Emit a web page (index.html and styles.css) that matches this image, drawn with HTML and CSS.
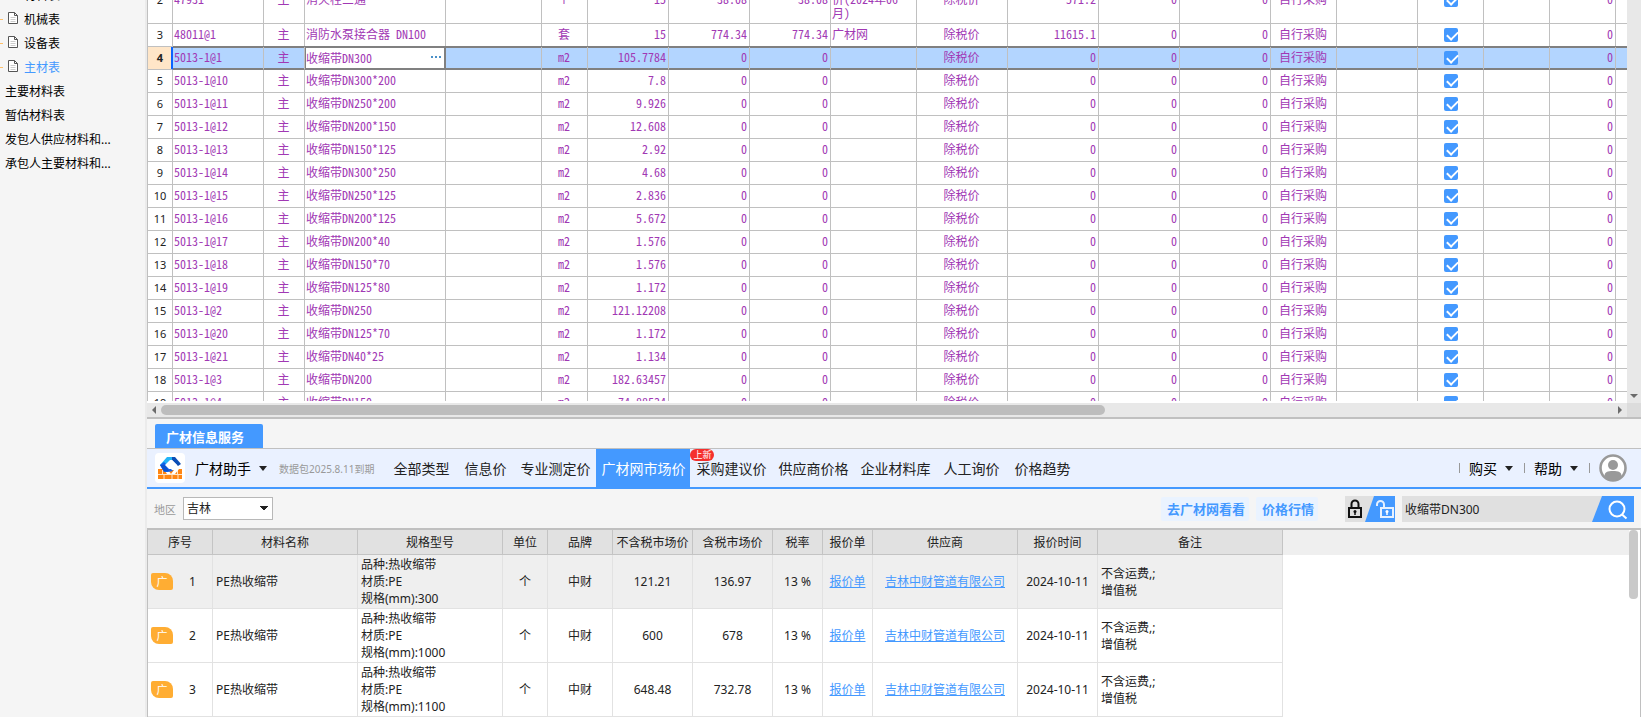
FILE: index.html
```html
<!DOCTYPE html>
<html lang="zh-CN">
<head>
  <meta charset="UTF-8">
  <meta name="viewport" content="width=device-width, initial-scale=1.0">
  <title>主材表</title>
  <link rel="stylesheet" href="styles.css">
</head>
<body>
  <!-- Shared icons -->
  <svg class="sprite" aria-hidden="true">
    <symbol id="icon-doc" viewBox="0 0 10 12">
      <path d="M.5.5h6l3 3v8h-9z" fill="#fff" stroke="#555"/>
      <path d="M6.5.5v3h3" fill="none" stroke="#555"/>
      <path d="M2.5 5.5h5M2.5 7.5h5M2.5 9.5h5" stroke="#ccc"/>
    </symbol>
  </svg>

  <!-- Sidebar -->
  <nav id="sidebar">
    <a class="child" href="#"><svg><use href="#icon-doc"/></svg>材料表</a>
    <a class="child" href="#"><svg><use href="#icon-doc"/></svg>机械表</a>
    <a class="child" href="#"><svg><use href="#icon-doc"/></svg>设备表</a>
    <a class="child current" href="#"><svg><use href="#icon-doc"/></svg>主材表</a>
    <a href="#">主要材料表</a>
    <a href="#">暂估材料表</a>
    <a href="#">发包人供应材料和...</a>
    <a href="#">承包人主要材料和...</a>
  </nav>

  <main>
    <!-- Material grid -->
    <section id="grid-area">
      <div id="grid">
        <table class="materials">
          <colgroup>
            <col class="w25"><col class="w91"><col class="w41"><col class="w141"><col class="w96">
            <col class="w46"><col class="w81"><col class="w81"><col class="w81"><col class="w86">
            <col class="w91"><col class="w91"><col class="w81"><col class="w91"><col class="w66">
            <col class="w81"><col class="w66"><col class="w66"><col class="w66"><col>
          </colgroup>
          <tbody id="materials-body"></tbody>
        </table>
      </div>
      <div class="vscroll"><span class="arrow down"></span></div>
      <div class="hscroll">
        <span class="arrow left"></span>
        <div class="track"><div class="thumb"></div></div>
        <span class="arrow right"></span>
      </div>
      <div class="corner"></div>
    </section>

    <!-- Price information service -->
    <section id="service">
      <div class="service-tabs">
        <button class="service-tab">广材信息服务</button>
      </div>

      <header class="topbar">
        <svg class="logo" viewBox="0 0 30 30">
          <rect width="30" height="30" rx="4" fill="#fff"/>
          <path d="M3 16h24v10H3z" fill="#ff8512"/>
          <path d="M3 21.500h24M9 22v4M17 22v4M23 22v4M7.500 17v4M22.500 16v5" stroke="#ffe3c4"/>
          <path d="M8 15l4 6h8l4-5h-5z" fill="#fff"/>
          <path d="M13 17h6l-3 4z" fill="#ff8512"/>
          <path d="M12 4h7l-6 8H5z" fill="#22b4f7"/>
          <path d="M5 12l4-3 9 9-5 1H9z" fill="#1261e8"/>
          <path d="M5 12h5l4 6H9z" fill="#0b53d0"/>
          <path d="M17 4h3l6 7-3 2-6-6z" fill="#0b4db5"/>
          <path d="M10 12l5-5h2l5 5-4 4h-4z" fill="#fff"/>
        </svg>
        <button class="drop brand">广材助手</button>
        <span class="expires">数据包2025.8.11到期</span>
        <nav class="menu">
          <a class="short" href="#">全部类型</a>
          <a class="short" href="#">信息价</a>
          <a href="#">专业测定价</a>
          <a class="active" href="#">广材网市场价</a>
          <a href="#">采购建议价<span class="new">上新</span></a>
          <a href="#">供应商价格</a>
          <a href="#">企业材料库</a>
          <a class="short" href="#">人工询价</a>
          <a class="short" href="#">价格趋势</a>
        </nav>
        <div class="account">
          <button class="drop">购买</button>
          <button class="drop">帮助</button>
          <button class="avatar" aria-label="账户">
            <svg viewBox="0 0 28 28">
              <circle cx="14" cy="14" r="12.5" fill="#fff" stroke="#999" stroke-width="2.6"/>
              <circle cx="14" cy="11" r="5" fill="#999"/>
              <path d="M5.500 22c0-4 3-5 8.500-5s8.500 1 8.500 5c-2 3-5 4.500-8.500 4.500S7.500 25 5.500 22z" fill="#999"/>
            </svg>
          </button>
        </div>
      </header>

      <div class="filters">
        <label for="region">地区</label>
        <select id="region">
          <option>吉林</option>
        </select>
        <div class="links">
          <a href="#">去广材网看看</a>
          <a href="#">价格行情</a>
        </div>
        <button class="lock" aria-label="锁定">
          <svg viewBox="0 0 50 26">
            <path d="M29 0h21v26H20z" fill="#4499ff"/>
            <rect x="4" y="12" width="12" height="9" fill="none" stroke="#111" stroke-width="2"/>
            <path d="M6.500 12V8a3.500 3.500 0 0 1 7 0v4" fill="none" stroke="#111" stroke-width="2"/>
            <circle cx="10" cy="15.500" r="1.500" fill="#111"/><path d="M10 16v3" stroke="#111" stroke-width="1.500"/>
            <rect x="36" y="12" width="12" height="9" fill="none" stroke="#e6f1ff" stroke-width="2"/>
            <path d="M32 10V8.500a3.500 3.500 0 0 1 7 0V12" fill="none" stroke="#e6f1ff" stroke-width="2"/>
            <circle cx="42" cy="15.500" r="1.500" fill="#fff"/><path d="M42 16v3" stroke="#fff" stroke-width="1.500"/>
          </svg>
        </button>
        <form class="search">
          <input type="text" value="收缩带DN300" aria-label="搜索">
          <button type="button" aria-label="搜索">
            <svg viewBox="0 0 42 26">
              <path d="M10 0h32v26H0z" fill="#4499ff"/>
              <circle cx="25" cy="13" r="7.500" fill="none" stroke="#fff" stroke-width="2"/>
              <path d="M30 18.500l4.500 4" stroke="#fff" stroke-width="2"/>
            </svg>
          </button>
        </form>
      </div>

      <div class="results">
        <table class="quotes">
          <thead>
            <tr>
              <th class="w65">序号</th>
              <th class="w145">材料名称</th>
              <th class="w145">规格型号</th>
              <th class="w45">单位</th>
              <th class="w65">品牌</th>
              <th class="w80">不含税市场价</th>
              <th class="w80">含税市场价</th>
              <th class="w50">税率</th>
              <th class="w50">报价单</th>
              <th class="w145">供应商</th>
              <th class="w80">报价时间</th>
              <th class="w185">备注</th>
            </tr>
          </thead>
          <tbody id="quotes-body"></tbody>
        </table>
        <div class="results-scroll"><div class="thumb"></div></div>
      </div>
    </section>
  </main>

  <script>
    // code, name, unit, quantity, price, source, total
    const materials = [
      ['47931', '消火栓三通', '个', '15', '38.08', '长春市信息<br>价(2024年06<br>月)', '571.2'],
      ['48011@1', '消防水泵接合器 DN100', '套', '15', '774.34', '广材网', '11615.1'],
      ['5013-1@1', '收缩带DN300', 'm2', '105.7784'],
      ['5013-1@10', '收缩带DN300*200', 'm2', '7.8'],
      ['5013-1@11', '收缩带DN250*200', 'm2', '9.926'],
      ['5013-1@12', '收缩带DN200*150', 'm2', '12.608'],
      ['5013-1@13', '收缩带DN150*125', 'm2', '2.92'],
      ['5013-1@14', '收缩带DN300*250', 'm2', '4.68'],
      ['5013-1@15', '收缩带DN250*125', 'm2', '2.836'],
      ['5013-1@16', '收缩带DN200*125', 'm2', '5.672'],
      ['5013-1@17', '收缩带DN200*40', 'm2', '1.576'],
      ['5013-1@18', '收缩带DN150*70', 'm2', '1.576'],
      ['5013-1@19', '收缩带DN125*80', 'm2', '1.172'],
      ['5013-1@2', '收缩带DN250', 'm2', '121.12208'],
      ['5013-1@20', '收缩带DN125*70', 'm2', '1.172'],
      ['5013-1@21', '收缩带DN40*25', 'm2', '1.134'],
      ['5013-1@3', '收缩带DN200', 'm2', '182.63457'],
      ['5013-1@4', '收缩带DN150', 'm2', '74.88534'],
    ];
    const firstRow = 2;
    const selectedRow = 4;

    document.getElementById('materials-body').innerHTML = materials.map((m, i) => {
      const [code, name, unit, quantity, price = '0', source = '', total = '0'] = m;
      const no = firstRow + i;
      const selected = no === selectedRow;
      const nameCell = selected
        ? `<td class="editing"><div class="editor"><input type="text" value="${name}" aria-label="名称"><button aria-label="更多"><i></i><i></i><i></i></button></div></td>`
        : `<td>${name}</td>`;
      return `<tr class="${selected ? 'selected' : ''}${source.includes('<br>') ? ' tall' : ''}">
        <th scope="row">${no}</th>
        <td>${code}</td>
        <td class="center">主</td>
        ${nameCell}
        <td></td>
        <td class="center">${unit}</td>
        <td class="number">${quantity}</td>
        <td class="number">${price}</td>
        <td class="number">${price}</td>
        <td>${source}</td>
        <td class="center">除税价</td>
        <td class="number">${total}</td>
        <td class="number">0</td>
        <td class="number">0</td>
        <td class="center">自行采购</td>
        <td></td>
        <td class="check"><input type="checkbox" checked aria-label="第${no}行"></td>
        <td></td>
        <td class="number">0</td>
        <td></td>
      </tr>`;
    }).join('');

    const quotes = [
      { size: '300', net: '121.21', gross: '136.97' },
      { size: '1000', net: '600', gross: '678' },
      { size: '1100', net: '648.48', gross: '732.78' },
    ];

    document.getElementById('quotes-body').innerHTML = quotes.map((q, i) => `<tr>
        <td><div class="serial"><span class="badge">广</span>${i + 1}</div></td>
        <td class="text">PE热收缩带</td>
        <td class="text">品种:热收缩带<br>材质:PE<br>规格(mm):${q.size}</td>
        <td>个</td>
        <td>中财</td>
        <td>${q.net}</td>
        <td>${q.gross}</td>
        <td>13 %</td>
        <td><a href="#">报价单</a></td>
        <td><a href="#">吉林中财管道有限公司</a></td>
        <td>2024-10-11</td>
        <td class="text">不含运费,;<br>增值税</td>
      </tr>`).join('');

    document.getElementById('grid').scrollTop = 24;
    document.getElementById('sidebar').scrollTop = 17;
  </script>
</body>
</html>
```
FILE: styles.css
```css
* {
  box-sizing: border-box;
}

body {
  display: flex;
  height: 100vh;
  margin: 0;
  overflow: hidden;
  background-color: #f5f5f5;
  color: #222;
  font-family: "Noto Sans", "Noto Sans CJK SC", sans-serif;
  font-size: 12px;
}

button,
input,
select {
  margin: 0;
  padding: 0;
  border: none;
  border-radius: 0;
  background: none;
  color: inherit;
  font: inherit;
}

.sprite {
  position: absolute;
  width: 0;
  height: 0;
}

/* Sidebar */
#sidebar {
  flex: 0 0 147px;
  overflow: hidden;
  border-right: 2px solid #ebebeb;
  padding-bottom: 100vh;
}

#sidebar a {
  display: flex;
  align-items: center;
  height: 24px;
  padding-left: 5px;
  color: #000;
  text-decoration: none;
  white-space: nowrap;
}

#sidebar .child {
  padding-left: 0;
}

#sidebar .child::before {
  content: "";
  width: 3px;
  height: 1px;
  margin-right: 5px;
  background-color: #ffc06a;
}

#sidebar svg {
  width: 10px;
  height: 12px;
  margin: 0 6px 3px 0;
}

#sidebar .current {
  color: #4499ff;
}

main {
  display: flex;
  flex: 1;
  flex-direction: column;
  min-width: 0;
}

/* Material grid */
#grid-area {
  display: grid;
  flex: 1;
  grid-template-columns: 1fr 14px;
  grid-template-rows: 1fr 14px;
  min-height: 0;
  background-color: #fff;
}

#grid {
  overflow: hidden;
  margin-bottom: 2px;
  border-left: 1px solid #c0c0c0;
}

.materials {
  width: 100%;
  table-layout: fixed;
  border-spacing: 0;
  color: #a138b4;
  font-family: "Noto Sans CJK SC", sans-serif;
  font-feature-settings: "hwid";
  line-height: 14px;
}

.w25 { width: 25px; }
.w41 { width: 41px; }
.w45 { width: 45px; }
.w46 { width: 46px; }
.w50 { width: 50px; }
.w65 { width: 65px; }
.w66 { width: 66px; }
.w80 { width: 80px; }
.w81 { width: 81px; }
.w86 { width: 86px; }
.w91 { width: 91px; }
.w96 { width: 96px; }
.w141 { width: 141px; }
.w145 { width: 145px; }
.w185 { width: 185px; }

.materials th,
.materials td {
  height: 23px;
  padding: 0 2px 2px 1px;
  border-right: 1px solid #c0c0c0;
  border-bottom: 1px solid #c0c0c0;
  white-space: nowrap;
}

.materials td:last-child {
  border-right: none;
}

.materials .tall td {
  height: 48px;
}

.materials th {
  padding: 0;
  color: #222;
  font-family: "Noto Sans", sans-serif;
  font-size: 11px;
  font-weight: normal;
}

.materials .center {
  text-align: center;
}

.materials .number {
  text-align: right;
}

.materials .check {
  padding: 0;
}

.materials .selected th {
  border-right-color: #0a64ff;
  background-color: #ffe6c8;
  box-shadow: inset -1px 0 #0a64ff;
  font-weight: bold;
}

.materials .selected td {
  border-bottom-color: #808080;
  background-color: #b3d5ff;
  box-shadow: 0 -1px #808080, inset 0 1px #808080, inset 0 -1px #808080;
}

.materials .selected .editing {
  padding-right: 4px;
  border-right-color: #808080;
  background-color: #fff;
  box-shadow: 0 -1px #808080, inset 0 0 0 1px #808080;
}

.editor {
  display: flex;
  align-items: center;
}

.editor input {
  flex: 1;
  min-width: 0;
  height: 18px;
  font-feature-settings: "hwid";
}

.editor button {
  display: flex;
  gap: 2px;
}

.editor i {
  width: 2px;
  height: 2px;
  background-color: #4a90c8;
}

.materials input[type="checkbox"] {
  display: block;
  appearance: none;
  width: 14px;
  height: 14px;
  margin: 0 auto;
  border-radius: 2px;
  background-color: #4499ff;
}

.materials input[type="checkbox"]::before {
  content: "";
  display: block;
  width: 9px;
  height: 5px;
  border-bottom: 2px solid #fff;
  border-left: 2px solid #fff;
  transform: translate(3px, 3px) rotate(-45deg);
}

/* Scrollbars */
.vscroll,
.hscroll {
  display: flex;
  align-items: center;
  background-color: #e8e8e8;
}

.vscroll {
  align-items: flex-end;
  justify-content: center;
  padding-bottom: 5px;
}

.hscroll {
  gap: 5px;
  padding: 0 5px;
}

.hscroll .track {
  flex: 1;
}

.hscroll .thumb {
  width: 65%;
  height: 10px;
  border-radius: 5px;
  background-color: #bdbdbd;
}

.corner {
  background-color: #dcdcdc;
}

.arrow {
  border: 4px solid transparent;
}

.arrow.down {
  border-top-color: #6b6b6b;
  border-bottom: none;
}

.arrow.left {
  border-right-color: #6b6b6b;
  border-left: none;
}

.arrow.right {
  border-left-color: #6b6b6b;
  border-right: none;
}

/* Service panel */
#service {
  border-top: 2px solid #c0c0c0;
}

.service-tabs {
  display: flex;
  padding: 5px 8px 0;
  border-bottom: 1px solid #c0c0c0;
}

.service-tab {
  width: 108px;
  height: 24px;
  padding-left: 11px;
  border-radius: 2px 2px 0 0;
  background-color: #4499ff;
  color: #fff;
  font-size: 13px;
  font-weight: bold;
  text-align: left;
}

.topbar {
  display: flex;
  align-items: center;
  height: 40px;
  padding: 0 14px 0 8px;
  border-bottom: 2px solid #4499ff;
  background-color: #eaf1ff;
  font-size: 14px;
  white-space: nowrap;
}

.logo {
  width: 30px;
  height: 30px;
  margin-right: 10px;
}

.drop {
  display: flex;
  align-items: center;
  gap: 8px;
  color: #000;
}

.drop::after {
  content: "";
  border: 4px solid transparent;
  border-top: 5px solid #222;
  border-bottom: none;
}

.expires {
  margin-left: 12px;
  color: #999;
  font-size: 10px;
}

.menu {
  display: flex;
  align-self: stretch;
  margin-left: 12px;
}

.menu a {
  position: relative;
  display: flex;
  align-items: center;
  padding: 0 6px;
  color: #222;
  text-decoration: none;
}

.menu .short {
  padding: 0 8px 0 7px;
}

.menu .active {
  padding: 0 5px;
  background-color: #4499ff;
  color: #fff;
}

.menu .new {
  position: absolute;
  top: 0;
  left: 0;
  padding: 0 3px;
  border-radius: 6px;
  background-color: #f5302e;
  color: #fff;
  font-size: 9px;
  line-height: 12px;
}

.account {
  display: flex;
  align-items: center;
  margin-left: auto;
}

.account .drop {
  width: 65px;
}

.account button::before {
  content: "";
  width: 1px;
  height: 10px;
  margin-right: 1px;
  background-color: #999;
}

.account .avatar {
  display: flex;
  align-items: center;
}

.account .avatar::before {
  margin-right: 9px;
}

.avatar svg {
  width: 28px;
  height: 28px;
}

.filters {
  display: flex;
  align-items: center;
  height: 39px;
  padding: 0 7px;
}

.filters label {
  color: #999;
  font-size: 11px;
}

#region {
  width: 90px;
  height: 23px;
  margin-left: 7px;
  padding-left: 3px;
  border: 1px solid #b8b8b8;
  appearance: none;
  background: conic-gradient(from 321deg at 50% 100%, #222 78deg, #fff 0) right 4px center / 8px 5px no-repeat, #fff;
}

.links {
  display: flex;
  gap: 7px;
  margin-left: auto;
}

.links a {
  padding: 0 4px 0 6px;
  border-radius: 2px;
  background-color: #eaf3ff;
  color: #4499ff;
  font-size: 13px;
  font-weight: bold;
  line-height: 24px;
  text-decoration: none;
}

.lock {
  width: 50px;
  height: 26px;
  margin: 0 7px 0 27px;
  background-color: #e0e0e0;
}

.lock svg,
.search svg {
  display: block;
}

.search {
  display: flex;
  width: 232px;
  height: 26px;
  background-color: #e0e0e0;
}

.search input {
  flex: 1;
  min-width: 0;
  padding-left: 3px;
}

.search button {
  width: 42px;
}

/* Quotes */
.results {
  display: flex;
  justify-content: space-between;
  border: 1px solid #c0c0c0;
  border-top-width: 2px;
  border-bottom: none;
  background: linear-gradient(#efefef 25px, #fff 25px);
}

.quotes {
  width: 1135px;
  table-layout: fixed;
  border-spacing: 0;
  line-height: 17px;
}

.quotes th {
  height: 25px;
  padding: 0;
  border-right: 1px solid #c4c4c4;
  border-bottom: 1px solid #c4c4c4;
  background-color: #e1e1e1;
  font-weight: normal;
  white-space: nowrap;
}

.quotes td {
  height: 54px;
  padding: 0;
  border-right: 1px solid #e2e2e2;
  border-bottom: 1px solid #e2e2e2;
  background-color: #fff;
  text-align: center;
}

.quotes tr:first-child td {
  background-color: #efefef;
}

.quotes .text {
  padding-left: 3px;
  text-align: left;
}

.quotes a {
  color: #4499ff;
}

.serial {
  display: flex;
  align-items: center;
  gap: 16px;
  padding-left: 3px;
}

.badge {
  width: 22px;
  border-radius: 2px 8px 2px 8px;
  background-color: #ffad33;
  color: #fff;
  font-size: 11px;
}

.results-scroll {
  width: 11px;
  background-color: #fff;
}

.results-scroll .thumb {
  width: 9px;
  height: 69px;
  border-radius: 4px;
  background-color: #c9c9c9;
}
```
